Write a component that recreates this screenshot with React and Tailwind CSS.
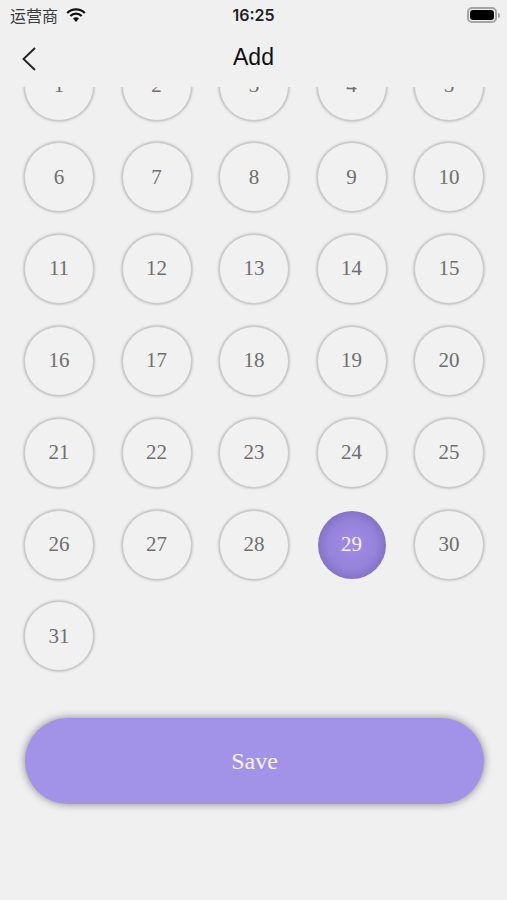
import React from 'react';

const days = Array.from({ length: 31 }, (_, i) => i + 1);
const selected = 29;

const Day = ({ day }) => {
    if (day === selected) {
        return (
            <div className="w-[68px] h-[68px] rounded-full flex items-center justify-center text-[21px] text-[#f6f2ff] bg-[radial-gradient(circle,#a08ce4_0%,#9582da_50%,#6f5cb0_100%)]">
                {day}
            </div>
        );
    }
    return (
        <div className="w-[70px] h-[70px] rounded-full flex items-center justify-center text-[21px] text-[#6f6f6f] bg-[#f1f1f1] border border-[#cbcbcb] shadow-[0_0_3px_rgba(0,0,0,0.35)]">
            {day}
        </div>
    );
};

const App = () => {
    return (
        <div className="w-[507px] h-[900px] overflow-hidden bg-[#f0f0f0] flex flex-col font-['Liberation_Serif',serif]">
            {/* status bar */}
            <div className="h-[30px] shrink-0 pl-[10px] pr-[7px] flex items-center justify-between font-['Inter','Noto_Sans_CJK_SC',sans-serif] relative">
                <div className="flex items-center gap-[8px] text-[#3a3a3a] text-[16px] font-['Noto_Sans_CJK_SC',sans-serif]">
                    <span>运营商</span>
                    <svg width="20" height="14" viewBox="0 0 20 14" fill="none">
                        <path d="M1.2 5 A12.5 12.5 0 0 1 18.8 5" stroke="#111" strokeWidth="2.3" />
                        <path d="M4.3 8 A8.2 8.2 0 0 1 15.7 8" stroke="#111" strokeWidth="2.3" />
                        <path d="M10 14 L7 10.6 A4.3 4.3 0 0 1 13 10.6 Z" fill="#111" />
                    </svg>
                </div>
                <span className="absolute left-0 right-0 text-center text-[16px] font-semibold text-[#222]">16:25</span>
                <div className="flex items-center gap-[1px]">
                    <div className="w-[30px] h-[16px] rounded-[5px] border-2 border-[#a5a5a5] p-[1px] flex">
                        <div className="flex-1 rounded-[3px] bg-black" />
                    </div>
                    <div className="w-[2px] h-[5px] rounded-r-sm bg-[#a5a5a5]" />
                </div>
            </div>

            {/* nav bar */}
            <div className="h-[57px] shrink-0 flex items-center justify-center relative">
                <svg className="absolute left-[21px] top-[16px]" width="16" height="26" viewBox="0 0 16 26" fill="none">
                    <path d="M14 2 L2.5 13 L14 24" stroke="#222" strokeWidth="1.9" />
                </svg>
                <span className="text-[23px] text-[#111] font-['Liberation_Sans',sans-serif] mt-[-2px]">Add</span>
            </div>

            {/* days, scrolled a little */}
            <div className="h-[610px] shrink-0 overflow-hidden pl-[10.25px] pr-[9.25px]">
                <div className="grid grid-cols-5 gap-y-[21.8px] mt-[-36.4px] justify-items-center">
                    {days.map((day) => (
                        <div key={day} className="h-[70px] flex items-center justify-center">
                            <Day day={day} />
                        </div>
                    ))}
                </div>
            </div>

            {/* save */}
            <div className="pl-[25px] pr-[23px] mt-[21px]">
                <button className="w-full h-[86px] rounded-[43px] bg-[#a293e8] text-[#f7f4ff] text-[24px] shadow-[0_0_8px_rgba(0,0,0,0.45)]">
                    Save
                </button>
            </div>
        </div>
    );
};

export default App;
